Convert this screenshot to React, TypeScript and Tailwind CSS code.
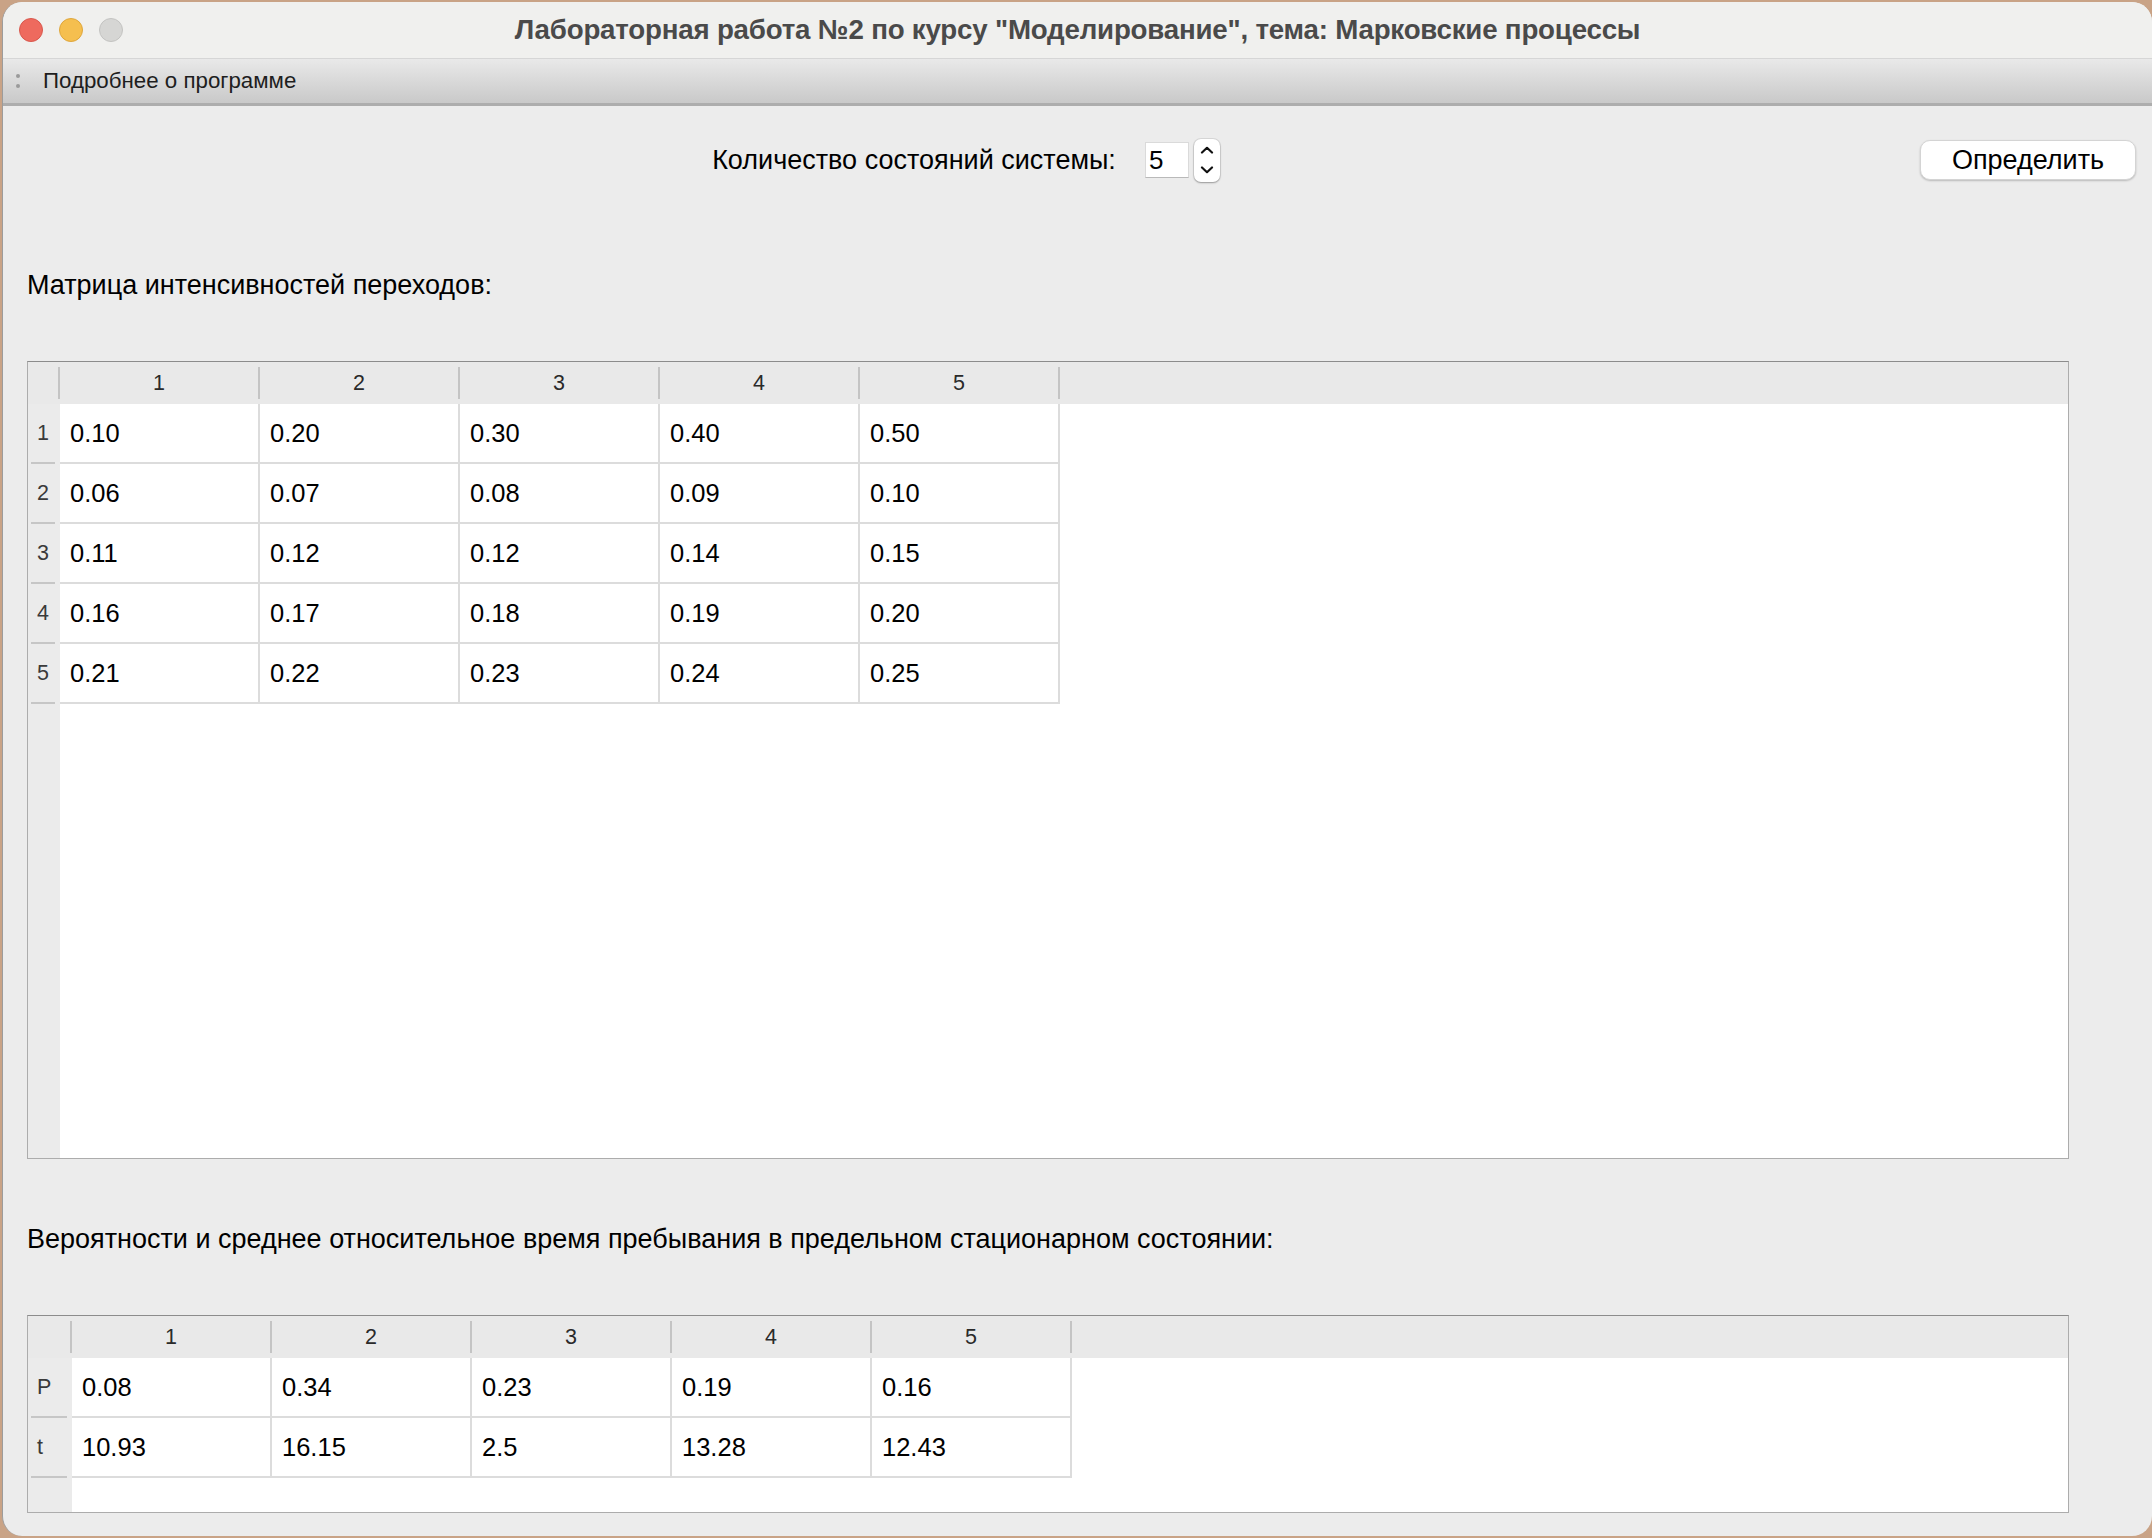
import React from "react";

const matrix: string[][] = [
  ["0.10", "0.20", "0.30", "0.40", "0.50"],
  ["0.06", "0.07", "0.08", "0.09", "0.10"],
  ["0.11", "0.12", "0.12", "0.14", "0.15"],
  ["0.16", "0.17", "0.18", "0.19", "0.20"],
  ["0.21", "0.22", "0.23", "0.24", "0.25"],
];

const probs: string[][] = [
  ["0.08", "0.34", "0.23", "0.19", "0.16"],
  ["10.93", "16.15", "2.5", "13.28", "12.43"],
];

const cols = ["1", "2", "3", "4", "5"];

type GridProps = {
  rowLabels: string[];
  data: string[][];
  labelW: string;
  lineW: string;
  heightCls: string;
};

function Grid({ rowLabels, data, labelW, lineW, heightCls }: GridProps) {
  return (
    <div
      className={`w-[2042px] ${heightCls} border border-[#acacac] border-t-[#8c8c8c] flex flex-col bg-white`}
    >
      {/* header */}
      <div className="flex h-[42px] shrink-0 bg-[#e9e9e9]">
        <div className={`${labelW} flex items-center justify-end`}>
          <div className="w-[2px] h-[32px] bg-[#c4c4c4]" />
        </div>
        {cols.map((c) => (
          <div key={c} className="w-[200px] flex items-center">
            <div className="flex-1 text-center text-[21.5px] text-[#2a2a2a]">{c}</div>
            <div className="w-[2px] h-[32px] bg-[#c4c4c4]" />
          </div>
        ))}
        <div className="flex-1" />
      </div>
      {/* body */}
      <div className="flex flex-1">
        <div className={`${labelW} bg-[#ebebeb] flex flex-col`}>
          {rowLabels.map((r) => (
            <div key={r} className="h-[60px] flex flex-col">
              <div className="flex-1 flex items-center pl-[9px] text-[21.5px] text-[#3a3a3a]">{r}</div>
              <div className={`${lineW} h-[2px] ml-[3px] bg-[#c6c6c6]`} />
            </div>
          ))}
        </div>
        <div className="flex-1 bg-white flex flex-col">
          {data.map((row, i) => (
            <div key={i} className="flex h-[60px]">
              {row.map((v, j) => (
                <div
                  key={j}
                  className="w-[200px] h-[60px] border-r-2 border-b-2 border-[#dcdcdc] flex items-center pl-[10px] text-[25.5px] text-black"
                >
                  {v}
                </div>
              ))}
            </div>
          ))}
        </div>
      </div>
    </div>
  );
}

export default function App() {
  return (
    <div className="w-[2152px] h-[1538px] bg-[#c9a386] overflow-hidden font-['Liberation_Sans',Arial,sans-serif]">
      <div className="ml-[2px] mt-[2px] w-[2150px] h-[1534px] rounded-[20px] bg-[#ececec] border-l border-[#9c9c9c] overflow-hidden flex flex-col">
        {/* title bar */}
        <div className="h-[57px] shrink-0 bg-[#f0f0ee] border-b border-[#d6d6d6] flex items-center">
          <div className="w-[120px] flex items-center gap-[16px] pl-[16px]">
            <div className="w-[24px] h-[24px] rounded-full bg-[#ee6a5e] border border-[#d8584d]" />
            <div className="w-[24px] h-[24px] rounded-full bg-[#f5bf4f] border border-[#dea63c]" />
            <div className="w-[24px] h-[24px] rounded-full bg-[#d6d6d4] border border-[#c3c3c1]" />
          </div>
          <div className="flex-1 text-center font-bold text-[27.7px] text-[#4a4a4a] tracking-[-0.2px]">
            Лабораторная работа №2 по курсу "Моделирование", тема: Марковские процессы
          </div>
          <div className="w-[120px]" />
        </div>
        {/* toolbar */}
        <div className="h-[47px] shrink-0 bg-gradient-to-b from-[#e9e9e9] to-[#c9c9c9] border-b-[3px] border-[#adadad] flex items-center pl-[13px]">
          <div className="flex flex-col gap-[6px]">
            <div className="w-[4px] h-[4px] rounded-full bg-[#9a9a9a]" />
            <div className="w-[4px] h-[4px] rounded-full bg-[#9a9a9a]" />
          </div>
          <div className="ml-[23px] text-[22.3px] text-[#1e1e1e]">Подробнее о программе</div>
        </div>
        {/* content */}
        <div className="flex-1 flex flex-col pl-[24px] pr-[16px]">
          <div className="mt-[34px] h-[40px] flex items-center">
            <div className="flex-1" />
            <div className="flex items-center mr-[15px]">
              <div className="text-[27px] text-black">Количество состояний системы:</div>
              <div className="ml-[29px] w-[44px] h-[36px] bg-white border border-[#dadada] border-b-[#b9b9b9] flex items-center pl-[3px] text-[26px] text-black">
                5
              </div>
              <div className="ml-[5px] w-[26px] h-[43px] rounded-[7px] bg-white shadow-[0_0_0_1px_rgba(0,0,0,0.08),0_1px_2px_rgba(0,0,0,0.3)] flex flex-col items-center justify-center gap-[12px]">
                <svg width="14" height="8" viewBox="0 0 14 8">
                  <polyline points="2,6.5 7,1.8 12,6.5" fill="none" stroke="#111" strokeWidth="2.2" strokeLinecap="round" strokeLinejoin="round" />
                </svg>
                <svg width="14" height="8" viewBox="0 0 14 8">
                  <polyline points="2,1.5 7,6.2 12,1.5" fill="none" stroke="#111" strokeWidth="2.2" strokeLinecap="round" strokeLinejoin="round" />
                </svg>
              </div>
            </div>
            <div className="flex-1" />
            <button className="w-[216px] h-[40px] rounded-[10px] bg-white border border-[#d4d4d4] shadow-[0_1px_2px_rgba(0,0,0,0.22)] text-[27px] text-black flex items-center justify-center">
              Определить
            </button>
          </div>

          <div className="mt-[90px] h-[30px] leading-[30px] text-[27px] text-black">
            Матрица интенсивностей переходов:
          </div>

          <div className="mt-[61px]">
            <Grid
              rowLabels={["1", "2", "3", "4", "5"]}
              data={matrix}
              labelW="w-[32px]"
              lineW="w-[24px]"
              heightCls="h-[798px]"
            />
          </div>

          <div className="mt-[65px] h-[30px] leading-[30px] text-[27px] text-black">
            Вероятности и среднее относительное время пребывания в предельном стационарном состоянии:
          </div>

          <div className="mt-[61px]">
            <Grid
              rowLabels={["P", "t"]}
              data={probs}
              labelW="w-[44px]"
              lineW="w-[36px]"
              heightCls="h-[198px]"
            />
          </div>
        </div>
      </div>
    </div>
  );
}
